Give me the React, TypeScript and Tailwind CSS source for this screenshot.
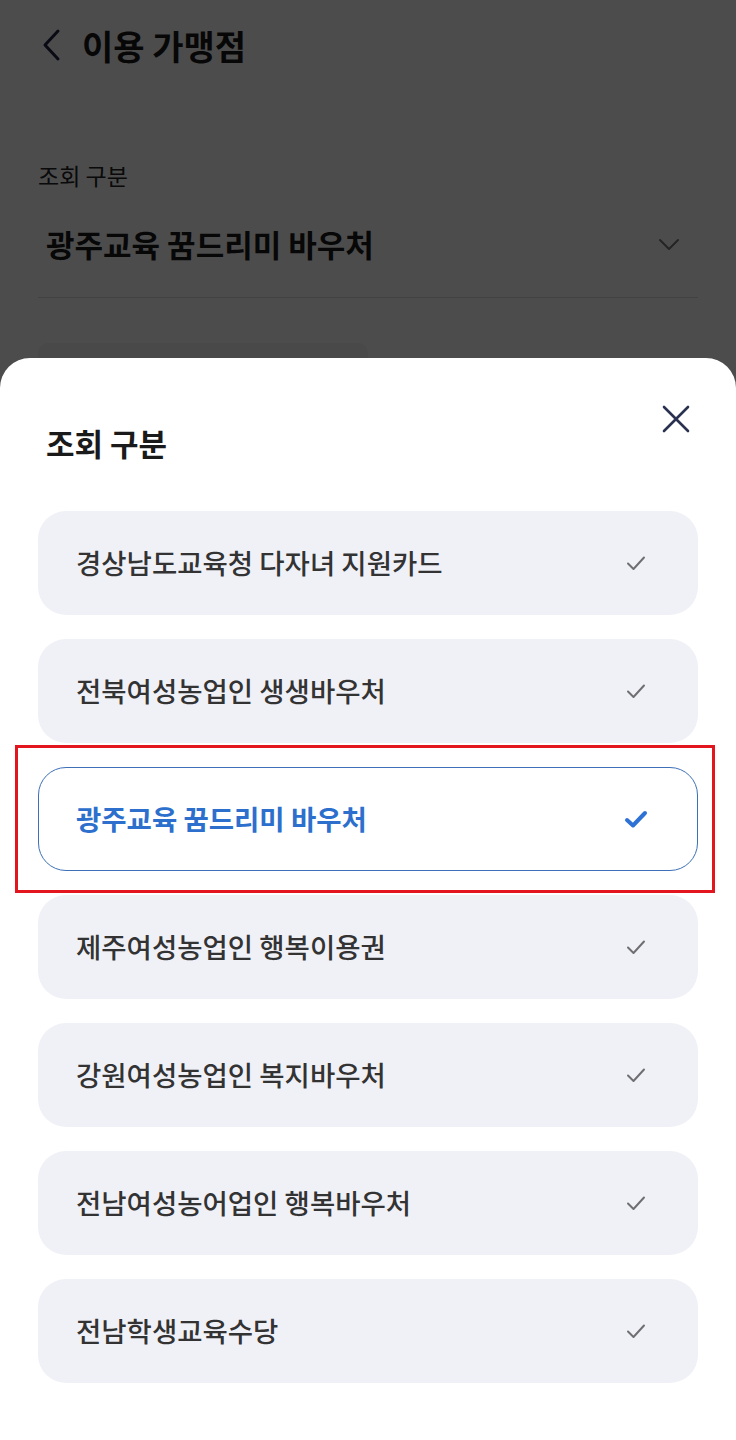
import React from "react";

const items = [
  "경상남도교육청 다자녀 지원카드",
  "전북여성농업인 생생바우처",
  "광주교육 꿈드리미 바우처",
  "제주여성농업인 행복이용권",
  "강원여성농업인 복지바우처",
  "전남여성농어업인 행복바우처",
  "전남학생교육수당",
];

const font = { fontFamily: '"Noto Sans CJK KR", "Noto Sans", sans-serif' };

function Check({ selected }: { selected: boolean }) {
  return selected ? (
    <svg width="24" height="20" viewBox="0 0 24 20" fill="none">
      <path d="M3 11 L9 16.5 L21 4" stroke="#2f72d6" strokeWidth="4" strokeLinecap="round" strokeLinejoin="round" />
    </svg>
  ) : (
    <svg width="24" height="20" viewBox="0 0 24 20" fill="none">
      <path d="M4 10.5 L9.5 16 L20 4.5" stroke="#6f6f72" strokeWidth="2" strokeLinecap="round" strokeLinejoin="round" />
    </svg>
  );
}

export default function App() {
  return (
    <div className="relative w-[736px] h-[1440px] overflow-hidden bg-white text-[#1a1a1a]" style={font}>
      {/* Underlying page */}
      <div className="flex flex-col">
        <div className="flex items-center h-[90px] pl-[40px] gap-[18px]">
          <svg width="24" height="34" viewBox="0 0 24 34" fill="none">
            <path d="M18 3 L5 17 L18 31" stroke="#1f2440" strokeWidth="3" strokeLinecap="round" strokeLinejoin="round" />
          </svg>
          <span className="text-[34px] font-bold">이용 가맹점</span>
        </div>
        <div className="px-[38px] pt-[68px]">
          <div className="text-[23px] text-[#222] leading-[34px]">조회 구분</div>
          <div className="flex items-center justify-between h-[106px] border-b border-[#dcdcdc] pl-[8px] pr-[18px]">
            <span className="text-[31px] font-bold">광주교육 꿈드리미 바우처</span>
            <svg width="22" height="14" viewBox="0 0 22 14" fill="none">
              <path d="M2 2 L11 11 L20 2" stroke="#7a7a7a" strokeWidth="2" strokeLinecap="round" strokeLinejoin="round" />
            </svg>
          </div>
          <div className="mt-[45px] w-[330px] h-[60px] rounded-[10px] bg-[#f3f3f3]" />
        </div>
      </div>

      {/* Dim overlay */}
      <div className="absolute inset-0 bg-black/70" />

      {/* Bottom sheet */}
      <div className="absolute left-0 right-0 top-[358px] bottom-0 bg-white rounded-t-[30px] flex flex-col">
        <div className="flex items-start justify-between pl-[46px] pr-[44px] pt-[44px]">
          <span className="text-[31px] font-bold mt-[20px] leading-[42px]">조회 구분</span>
          <svg width="32" height="32" viewBox="0 0 32 32" fill="none" className="mt-[1px]">
            <path d="M4 4 L28 28 M28 4 L4 28" stroke="#2b3150" strokeWidth="2.6" strokeLinecap="round" />
          </svg>
        </div>
        <div className="flex flex-col gap-[24px] px-[38px] mt-[47px]">
          {items.map((t, i) => {
            const sel = i === 2;
            return (
              <div
                key={t}
                className={
                  sel
                    ? "flex items-center justify-between h-[104px] rounded-[28px] border-[1.5px] border-[#3d70b8] bg-white pl-[37px] pr-[49px]"
                    : "flex items-center justify-between h-[104px] rounded-[28px] bg-[#f0f1f7] pl-[38px] pr-[50px]"
                }
              >
                <span
                  className={
                    sel
                      ? "text-[27.5px] font-bold text-[#2d6fcc]"
                      : "text-[27.5px] font-medium text-[#333]"
                  }
                >
                  {t}
                </span>
                <Check selected={sel} />
              </div>
            );
          })}
        </div>
      </div>

      {/* Red annotation box */}
      <div className="absolute left-[15px] top-[745px] w-[700px] h-[148px] border-[3px] border-[#e3161f]" />
    </div>
  );
}
